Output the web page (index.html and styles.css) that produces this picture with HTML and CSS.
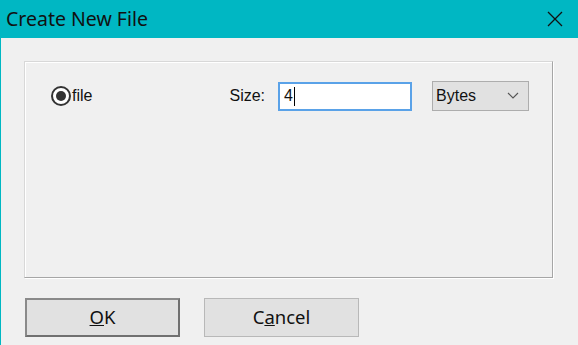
FILE: index.html
```html
<!DOCTYPE html>
<html lang="en">
<head>
    <meta charset="UTF-8">
    <title>Create New File</title>
    <link rel="stylesheet" href="styles.css">
</head>
<body>
    <div class="window">
        <div class="title-bar">
            <span class="title">Create New File</span>
            <span class="close">
                <svg width="16" height="16" viewBox="0 0 16 16">
                    <path d="M1 1 L15 15 M15 1 L1 15" stroke="#111" stroke-width="1.3" fill="none"/>
                </svg>
            </span>
        </div>

        <div class="content">
            <div class="group">
                <div class="row">
                    <label class="radio">
                        <span class="radio-mark"><span class="radio-dot"></span></span>
                        <span>file</span>
                    </label>
                    <span class="size-label">Size:</span>
                    <div class="text-input">4<span class="caret"></span></div>
                    <div class="select">
                        <span>Bytes</span>
                        <svg width="12" height="8" viewBox="0 0 12 8">
                            <path d="M1 1 L6 6 L11 1" stroke="#555" stroke-width="1.1" fill="none"/>
                        </svg>
                    </div>
                </div>
            </div>

            <div class="buttons">
                <button class="btn default"><u>O</u>K</button>
                <button class="btn">C<u>a</u>ncel</button>
            </div>
        </div>
    </div>
</body>
</html>
```

FILE: styles.css
```css
body {
    margin: 0;
    padding: 0;
    background: #f0f0f0;
    font-family: 'Liberation Sans', Arial, sans-serif;
    overflow: hidden;
}

.window {
    height: 345px;
    border-left: 1px solid #00b7c3;
    box-sizing: border-box;
}

.title-bar {
    height: 38px;
    background: #00b7c3;
    display: flex;
    align-items: center;
    justify-content: space-between;
    padding: 0 15px 0 5px;
}

.title {
    font-family: 'Noto Sans', sans-serif;
    font-size: 19.5px;
    color: #111;
    padding-bottom: 1px;
}

.close {
    display: flex;
}

.content {
    padding: 23px 0 0 23px;
}

.group {
    width: 529px;
    height: 217px;
    box-sizing: border-box;
    border: 1px solid #d8d8d8;
    border-right-color: #a6a6a6;
    border-bottom-color: #a6a6a6;
    box-shadow: inset 1px 1px 0 #ffffff, 1px 1px 0 #ffffff;
    padding: 19px 0 0 26px;
}

.row {
    display: flex;
    align-items: center;
    height: 30px;
    font-size: 16px;
    color: #111;
}

.radio {
    display: flex;
    align-items: center;
    gap: 1px;
}

.radio-mark {
    width: 20px;
    height: 20px;
    box-sizing: border-box;
    border: 2px solid #333;
    border-radius: 50%;
    background: #fff;
    display: flex;
    align-items: center;
    justify-content: center;
}

.radio-dot {
    width: 10px;
    height: 10px;
    border-radius: 50%;
    background: #333;
}

.size-label {
    margin-left: 137px;
    margin-right: 13px;
}

.text-input {
    width: 134px;
    height: 29px;
    box-sizing: border-box;
    background: #fff;
    border: 2px solid #5aa2e8;
    padding: 0 0 0 4px;
    display: flex;
    align-items: center;
}

.caret {
    width: 1px;
    height: 19px;
    background: #000;
    margin-left: 1px;
}

.select {
    width: 97px;
    height: 30px;
    box-sizing: border-box;
    margin-left: 20px;
    background: #e1e1e1;
    border: 1px solid #adadad;
    display: flex;
    align-items: center;
    justify-content: space-between;
    padding: 0 9px 0 3px;
}

.buttons {
    display: flex;
    gap: 24px;
    margin-top: 20px;
    margin-left: 1px;
}

.btn {
    width: 155px;
    height: 39px;
    background: #e1e1e1;
    border: 1px solid #b8b8b8;
    font-family: 'Noto Sans', sans-serif;
    font-size: 18.5px;
    color: #111;
    padding: 0 0 2px;
}

.btn.default {
    border: 2px solid #8a8a8a;
    border-right-color: #707070;
    border-bottom-color: #707070;
}
```
